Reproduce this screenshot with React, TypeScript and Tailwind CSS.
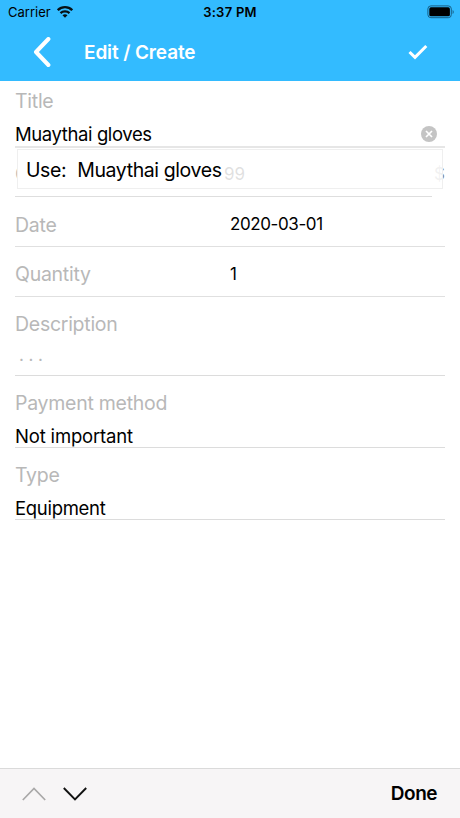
import type { ReactNode } from "react";

function Label({ children, className = "" }: { children: ReactNode; className?: string }) {
  return (
    <div className={`whitespace-nowrap text-[19.5px] leading-6 tracking-[-0.27px] text-[#b8b8b8] ${className}`}>
      {children}
    </div>
  );
}

function StatusBar() {
  return (
    <div className="grid h-6 grid-cols-3 items-center px-2 text-black">
      <div className="flex items-center gap-[6px]">
        <span className="text-[13px] leading-4">Carrier</span>
        <svg width="16" height="12" viewBox="0 0 16 12" fill="none" stroke="#071015" strokeWidth="2.3">
          <path d="M0.8 4.2C4.8 0.2 11.2 0.2 15.2 4.2" />
          <path d="M3.5 7.1C6 4.7 10 4.7 12.5 7.1" />
          <path d="M8 11.8L5.5 9.3C6.9 8 9.1 8 10.5 9.3Z" fill="#071015" stroke="none" />
        </svg>
      </div>
      <span className="text-center text-[13px] font-semibold leading-4 tracking-[0.25px]">3:37 PM</span>
      <svg className="-mr-[3px] justify-self-end" width="28" height="14" viewBox="0 0 28 14">
        <rect x="0.9" y="0.9" width="23.4" height="11.8" rx="3" fill="none" stroke="#176087" strokeWidth="1" />
        <rect x="2.3" y="2.3" width="20.6" height="9" rx="1.6" fill="#000" />
        <path d="M25.6 5v4c1.5-.6 1.5-3.4 0-4Z" fill="#176087" />
      </svg>
    </div>
  );
}

export default function App() {
  return (
    <div className="flex h-[818px] w-[460px] flex-col overflow-hidden bg-white font-['Inter','Liberation_Sans',sans-serif] text-black">
      <header className="h-[81px] shrink-0 bg-[#33bbff]">
        <StatusBar />
        <div className="flex h-[56px] items-center pl-8 pr-[32px] text-white">
          <svg width="20" height="30" viewBox="0 0 20 30" fill="none" stroke="currentColor" strokeWidth="4" strokeLinecap="round" strokeLinejoin="round">
            <path d="M16.4 2L4 15L16.4 28" />
          </svg>
          <h1 className="ml-8 pt-[2px] text-[19px] font-semibold leading-6 tracking-[-0.12px]">Edit / Create</h1>
          <svg className="ml-auto" width="20" height="16" viewBox="0 0 20 16" fill="none" stroke="currentColor" strokeWidth="3">
            <path d="M1.5 8L7 13.4L18.3 2" />
          </svg>
        </div>
      </header>

      <main className="flex-1 pl-[15px] pr-[15px]">
        <section className="relative flex h-[67px] flex-col border-b-2 border-[#e6e6e6] pt-2">
          <Label>Title</Label>
          <div className="mt-[9px] flex items-center justify-between pr-2">
            <span className="text-[18.5px] leading-6 tracking-[-0.4px]">Muaythai gloves</span>
            <svg width="16" height="16" viewBox="0 0 16 16">
              <circle cx="8" cy="8" r="8" fill="#c4c4c4" />
              <path d="M5 5l6 6M11 5l-6 6" stroke="#fff" strokeWidth="1.7" />
            </svg>
          </div>
          <div className="absolute left-[2px] top-[68px] z-10 flex h-10 w-[426px] items-center border border-[#efefef] bg-white/88 pt-px text-[19.5px] leading-6 tracking-[-0.4px]">
            <span className="bg-white pl-2">Use:</span>
            <span className="bg-white pl-[11px]">Muaythai gloves</span>
          </div>
        </section>

        <section className="mr-[13px] flex h-[49px] border-b border-[#dedede] pt-[14px]">
          <Label className="w-[209px]">C</Label>
          <span className="text-[17px] leading-6">99</span>
          <span className="-mr-[13px] ml-auto text-[17px] leading-6 text-[#888]">$</span>
        </section>

        <section className="flex h-[50px] border-b border-[#e0e0e0] pt-4">
          <Label className="w-[215px]">Date</Label>
          <span className="text-[17px] leading-[22px] tracking-[-0.4px]">2020-03-01</span>
        </section>
        <section className="flex h-[50px] border-b border-[#e0e0e0] pt-[15px]">
          <Label className="w-[215px]">Quantity</Label>
          <span className="pt-px text-[17px] leading-[22px]">1</span>
        </section>

        <section className="h-[79px] border-b border-[#dcdcdc] pt-[15px]">
          <Label>Description</Label>
          <div className="mt-[7px] whitespace-nowrap pl-1 text-[17px] leading-6 tracking-[-0.1px] text-[#b8b8b8]">. . .</div>
        </section>
        <section className="h-[72px] border-b border-[#dcdcdc] pt-[15px]">
          <Label>Payment method</Label>
          <div className="mt-[9px] text-[18.5px] leading-6 tracking-[-0.17px]">Not important</div>
        </section>
        <section className="h-[72px] border-b border-[#dcdcdc] pt-[15px]">
          <Label>Type</Label>
          <div className="mt-[9px] text-[18.5px] leading-6 tracking-[-0.3px]">Equipment</div>
        </section>
      </main>

      <footer className="flex h-[50px] shrink-0 items-center border-t border-[#dadada] bg-[#f7f5f6] pl-[22px] pr-[23px]">
        <svg width="24" height="14" viewBox="0 0 24 14" fill="none" stroke="#a9a8a8" strokeWidth="1.7">
          <path d="M.8 13L12 1.5L23.2 13" />
        </svg>
        <svg className="ml-[17px]" width="24" height="14" viewBox="0 0 24 14" fill="none" stroke="#111" strokeWidth="1.9">
          <path d="M.8 1L12 12.5L23.2 1" />
        </svg>
        <span className="ml-auto text-[19px] font-semibold leading-6 tracking-[-0.5px]">Done</span>
      </footer>
    </div>
  );
}
